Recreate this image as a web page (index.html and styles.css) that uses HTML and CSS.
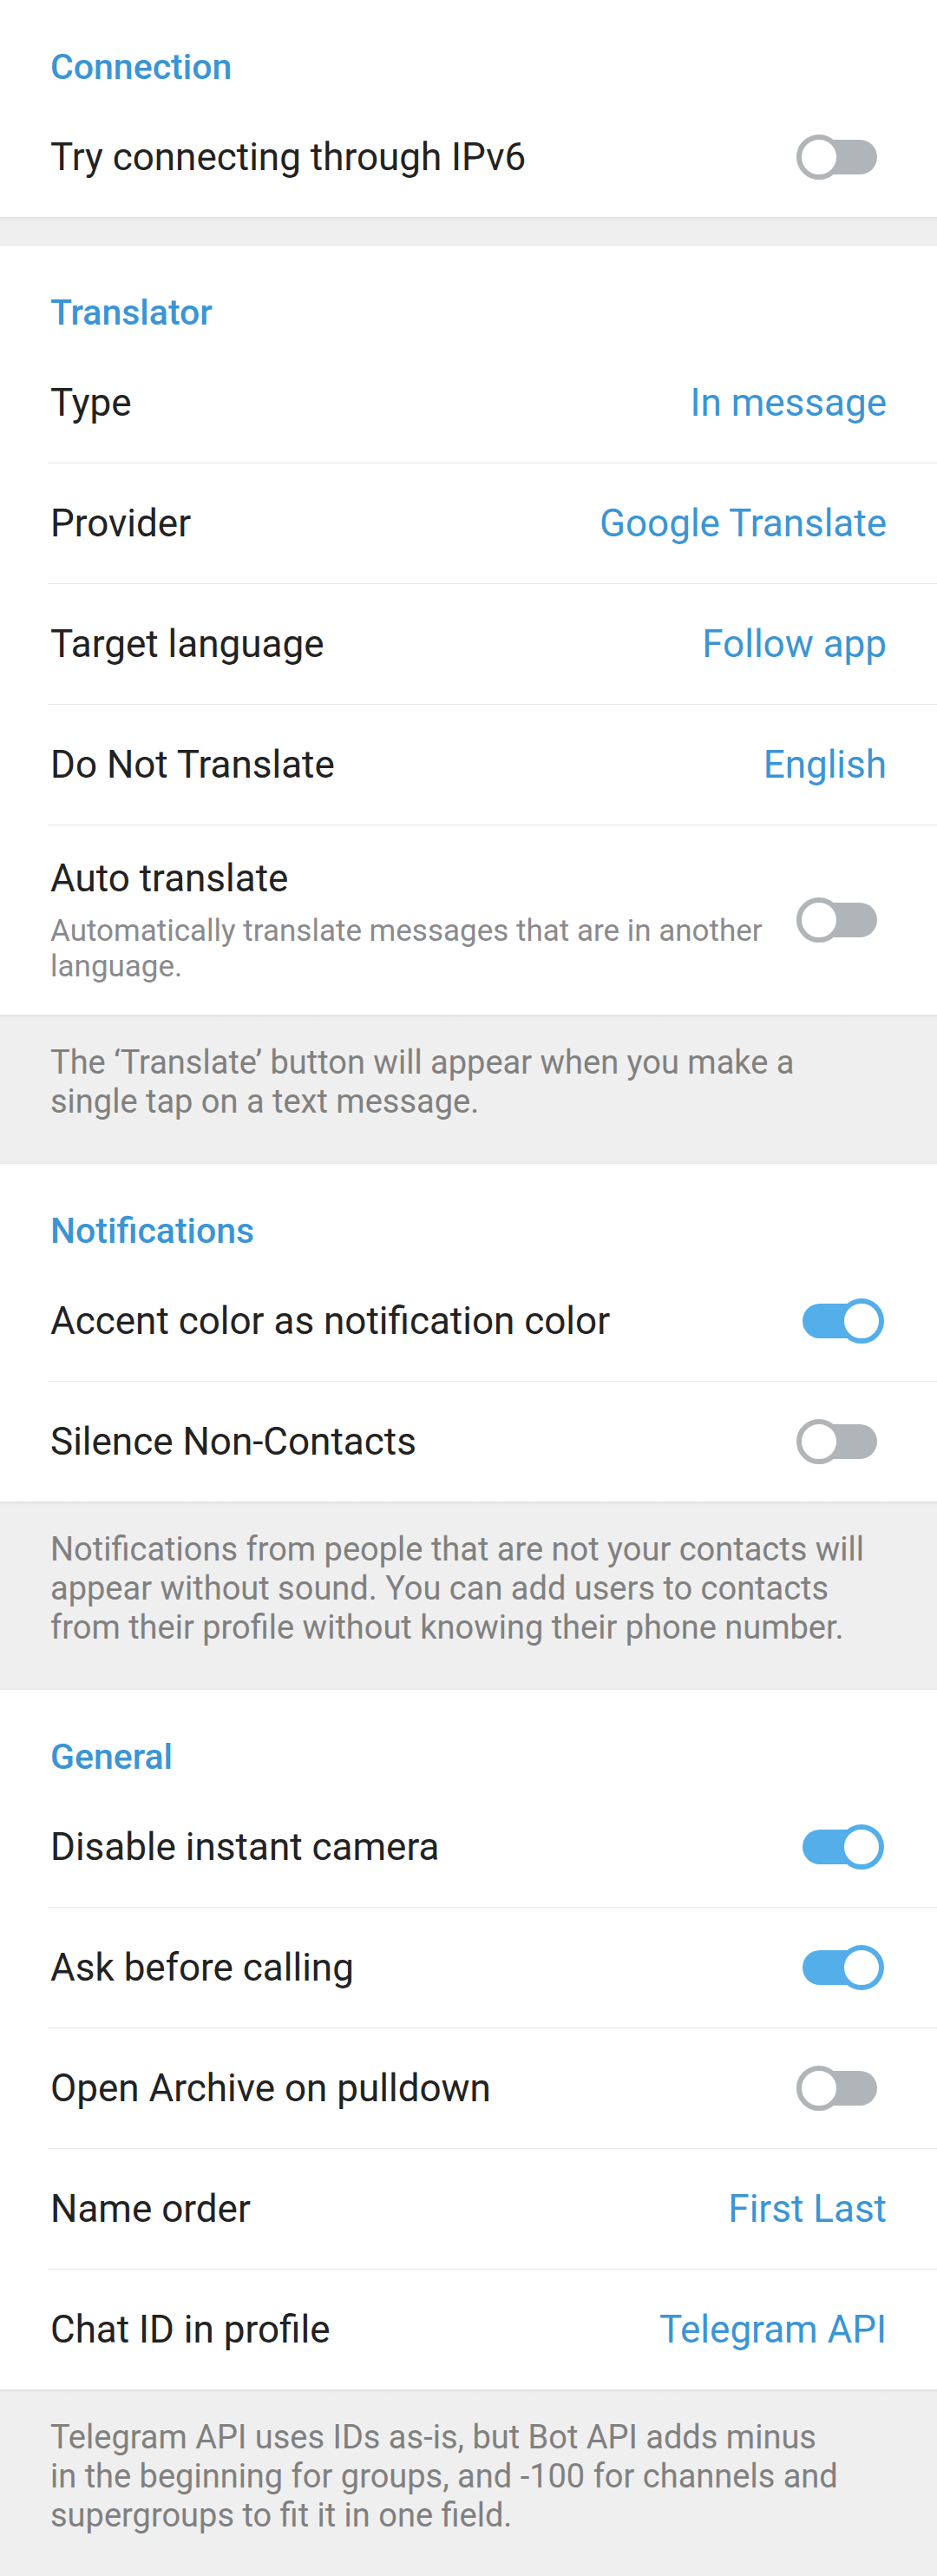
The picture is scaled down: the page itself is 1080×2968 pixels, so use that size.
FILE: index.html
```html
<!DOCTYPE html>
<html lang="en">
<head>
<meta charset="utf-8">
<title>Settings</title>
<link rel="stylesheet" href="styles.css">
</head>
<body>
<div class="page">
  <section class="section">
    <div class="header">Connection</div>
    <div class="row last">
      <span class="title">Try connecting through IPv6</span>
      <span class="toggle"><span class="track"></span><span class="knob"></span></span>
    </div>
  </section>
  <div class="gap"></div>

  <section class="section">
    <div class="header">Translator</div>
    <div class="row"><span class="title">Type</span><span class="value">In message</span></div>
    <div class="row"><span class="title">Provider</span><span class="value">Google Translate</span></div>
    <div class="row"><span class="title">Target language</span><span class="value">Follow app</span></div>
    <div class="row"><span class="title">Do Not Translate</span><span class="value">English</span></div>
    <div class="row tall last">
      <div class="text">
        <div class="title">Auto translate</div>
        <div class="sub">Automatically translate messages that are in another<br>language.</div>
      </div>
      <span class="toggle"><span class="track"></span><span class="knob"></span></span>
    </div>
  </section>
  <div class="info">The ‘Translate’ button will appear when you make a<br>single tap on a text message.</div>

  <section class="section">
    <div class="header">Notifications</div>
    <div class="row">
      <span class="title">Accent color as notification color</span>
      <span class="toggle on"><span class="track"></span><span class="knob"></span></span>
    </div>
    <div class="row last">
      <span class="title">Silence Non-Contacts</span>
      <span class="toggle"><span class="track"></span><span class="knob"></span></span>
    </div>
  </section>
  <div class="info">Notifications from people that are not your contacts will<br>appear without sound. You can add users to contacts<br>from their profile without knowing their phone number.</div>

  <section class="section">
    <div class="header">General</div>
    <div class="row">
      <span class="title">Disable instant camera</span>
      <span class="toggle on"><span class="track"></span><span class="knob"></span></span>
    </div>
    <div class="row">
      <span class="title">Ask before calling</span>
      <span class="toggle on"><span class="track"></span><span class="knob"></span></span>
    </div>
    <div class="row">
      <span class="title">Open Archive on pulldown</span>
      <span class="toggle"><span class="track"></span><span class="knob"></span></span>
    </div>
    <div class="row"><span class="title">Name order</span><span class="value">First Last</span></div>
    <div class="row last"><span class="title">Chat ID in profile</span><span class="value">Telegram API</span></div>
  </section>
  <div class="info end">Telegram API uses IDs as-is, but Bot API adds minus<br>in the beginning for groups, and -100 for channels and<br>supergroups to fit it in one field.</div>
</div>
</body>
</html>
```

FILE: styles.css
```css
html, body {
  margin: 0;
  padding: 0;
  background: #efefef;
}

body {
  font-family: Roboto, "Noto Sans", "Liberation Sans", sans-serif;
  -webkit-font-smoothing: antialiased;
}

.page {
  width: 1080px;
  display: flex;
  flex-direction: column;
}

.section {
  background: #ffffff;
  display: flex;
  flex-direction: column;
}

.header {
  height: 112px;
  box-sizing: border-box;
  padding: 52px 0 0 58px;
  font-size: 41px;
  line-height: 50px;
  font-weight: 500;
  color: #3a95d5;
}

.row {
  height: 139px;
  box-sizing: border-box;
  margin-left: 55px;
  padding: 0 58px 0 3px;
  border-bottom: 1px solid #e8e8e8;
  display: flex;
  align-items: center;
  justify-content: space-between;
}

.row.last {
  height: 138px;
  border-bottom: none;
}

.row.tall {
  height: 218px;
}

.title {
  font-size: 44px;
  line-height: 52px;
  color: #222222;
}

.value {
  font-size: 44px;
  line-height: 52px;
  color: #3a95d5;
}

.text {
  display: flex;
  flex-direction: column;
}

.sub {
  margin-top: 14px;
  font-size: 35px;
  line-height: 41px;
  color: #8a8a8e;
}

.toggle {
  position: relative;
  flex: none;
  width: 101px;
  height: 52px;
  margin-right: 3px;
}

.track {
  position: absolute;
  left: 7px;
  top: 6px;
  width: 86px;
  height: 40px;
  border-radius: 20px;
  background: #b0b5b9;
}

.knob {
  position: absolute;
  left: 0;
  top: 0;
  width: 52px;
  height: 52px;
  box-sizing: border-box;
  border-radius: 50%;
  border: 6px solid #b0b5b9;
  background: #ffffff;
}

.toggle.on .track {
  background: #53aeea;
}

.toggle.on .knob {
  left: 49px;
  border-color: #53aeea;
}

.gap {
  height: 33px;
  background:
    linear-gradient(to bottom, #e0e0e0 0, rgba(239, 239, 239, 0) 4px),
    linear-gradient(to top, #e6e6e6 0, rgba(239, 239, 239, 0) 2px),
    #efefef;
}

.info {
  box-sizing: border-box;
  padding: 33px 58px 49px 58px;
  font-size: 38px;
  line-height: 45px;
  color: #808080;
  background:
    linear-gradient(to bottom, #e0e0e0 0, rgba(239, 239, 239, 0) 4px),
    linear-gradient(to top, #e6e6e6 0, rgba(239, 239, 239, 0) 2px),
    #efefef;
}

.info.end {
  min-height: 217px;
  background:
    linear-gradient(to bottom, #e0e0e0 0, rgba(239, 239, 239, 0) 4px),
    #efefef;
}
```
